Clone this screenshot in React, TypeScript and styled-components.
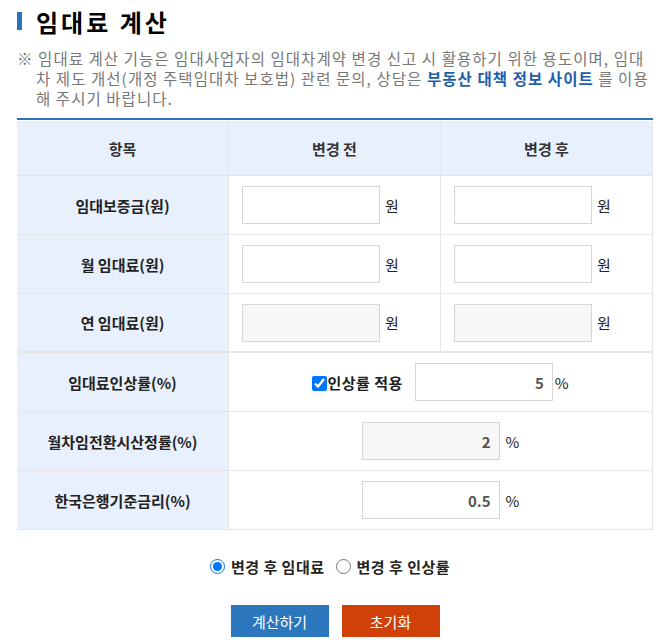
import React, { useState } from 'react';
import styled, { createGlobalStyle } from 'styled-components';

const GlobalStyle = createGlobalStyle`
  body {
    margin: 0;
    background: #fff;
    font-family: "Noto Sans CJK KR", "Noto Sans", sans-serif;
    color: #222;
  }
`;

const Page = styled.div`
  padding: 6px 15px 0 17px;
  width: 636px;
`;

const Title = styled.h2`
  display: flex;
  align-items: center;
  gap: 14px;
  margin: 0;
  height: 30px;
  font-size: 24px;
  font-weight: 700;
  letter-spacing: 3px;
  color: #000;

  &::before {
    content: '';
    width: 5px;
    height: 18px;
    background: #2a72bf;
  }
`;

const Note = styled.p`
  margin: 12px 0 10px;
  padding-left: 19px;
  text-indent: -19px;
  font-size: 15.5px;
  line-height: 20px;
  letter-spacing: 1.05px;
  color: #777;
  word-break: break-all;
`;

const Link = styled.a`
  color: #1f5ea8;
  font-weight: 700;
  text-decoration: none;
`;

const Grid = styled.div`
  display: grid;
  grid-template-columns: 212px 212px 212px;
  border-top: 2px solid #2a72bf;
`;

const HeadCell = styled.div`
  height: 56px;
  box-sizing: border-box;
  border-top: 1px solid #fff;
  border-bottom: 1px solid #dde3eb;
  border-right: 1px solid #e4e8ee;
  background: #e8f0fd;
  display: flex;
  align-items: center;
  justify-content: center;
  font-size: 15px;
  font-weight: 700;
  color: #333;
`;

const Label = styled.div<{ $thick?: boolean }>`
  height: 59px;
  box-sizing: border-box;
  border-bottom: ${p => (p.$thick ? '2px' : '1px')} solid #e6e6e6;
  border-right: 1px solid #e6e6e6;
  background: #e8f0fd;
  display: flex;
  align-items: center;
  justify-content: center;
  font-size: 15px;
  font-weight: 700;
  color: #222;
`;

const Cell = styled.div<{ $thick?: boolean; $span?: number; $center?: boolean }>`
  grid-column: span ${p => p.$span || 1};
  height: 59px;
  box-sizing: border-box;
  border-bottom: ${p => (p.$thick ? '2px' : '1px')} solid #e6e6e6;
  border-right: 1px solid #e6e6e6;
  display: flex;
  align-items: center;
  justify-content: ${p => (p.$center ? 'center' : 'flex-start')};
  padding-left: ${p => (p.$center ? '0' : '13px')};
  font-size: 15px;
  color: #222;
`;

const Field = styled.input<{ $w?: number }>`
  width: ${p => p.$w || 138}px;
  height: 38px;
  box-sizing: border-box;
  border: 1px solid #d6d6d6;
  background: #fff;
  padding: 0 8px;
  margin: 0;
  text-align: right;
  font-family: inherit;
  font-size: 15px;
  font-weight: 700;
  color: #555;
  outline: none;

  &:read-only {
    background: #f7f7f7;
  }
`;

const Unit = styled.span<{ $gap?: number }>`
  margin-left: ${p => p.$gap ?? 5}px;
  font-size: 15px;
  color: #222;
`;

const Check = styled.label`
  display: flex;
  align-items: center;
  font-size: 15px;
  font-weight: 700;
  letter-spacing: 0.5px;
  color: #222;
  margin-right: 12px;

  input {
    width: 15px;
    height: 15px;
    margin: 3px 0 0 0;
  }
`;

const Radios = styled.div`
  display: flex;
  justify-content: center;
  align-items: center;
  gap: 11px;
  margin: 26px 0 0;
  padding-right: 10px;
  height: 20px;
`;

const Radio = styled.label`
  display: flex;
  align-items: center;
  gap: 6px;
  font-size: 15px;
  font-weight: 700;
  letter-spacing: 0.5px;
  color: #222;

  input {
    width: 15px;
    height: 15px;
    margin: 0;
  }
`;

const Buttons = styled.div`
  display: flex;
  justify-content: center;
  gap: 13px;
  margin-top: 29px;
`;

const Button = styled.button<{ $tone: 'blue' | 'red' }>`
  width: 98px;
  height: 32px;
  border: 0;
  padding: 0;
  background: ${p => (p.$tone === 'blue' ? '#2b76bd' : '#d0410a')};
  color: #fff;
  font-family: inherit;
  font-size: 15px;
  cursor: pointer;
`;

const rentRows = [
  { label: '임대보증금(원)', readOnly: false },
  { label: '월 임대료(원)', readOnly: false },
  { label: '연 임대료(원)', readOnly: true },
];

export default function App() {
  const [mode, setMode] = useState('rent');
  const [apply, setApply] = useState(true);

  return (
    <Page>
      <GlobalStyle />
      <Title>임대료 계산</Title>
      <Note>
        ※ 임대료 계산 기능은 임대사업자의 임대차계약 변경 신고 시 활용하기 위한 용도이며, 임대차 제도 개선(개정 주택임대차 보호법) 관련 문의, 상담은{' '}
        <Link href="#">부동산 대책 정보 사이트</Link> 를 이용해 주시기 바랍니다.
      </Note>

      <Grid>
        <HeadCell>항목</HeadCell>
        <HeadCell>변경 전</HeadCell>
        <HeadCell>변경 후</HeadCell>

        {rentRows.map((r, i) => (
          <React.Fragment key={r.label}>
            <Label $thick={i === 2}>{r.label}</Label>
            <Cell $thick={i === 2}>
              <Field readOnly={r.readOnly} defaultValue="" />
              <Unit>원</Unit>
            </Cell>
            <Cell $thick={i === 2}>
              <Field readOnly={r.readOnly} defaultValue="" />
              <Unit>원</Unit>
            </Cell>
          </React.Fragment>
        ))}

        <Label>임대료인상률(%)</Label>
        <Cell $span={2} $center>
          <Check>
            <input type="checkbox" checked={apply} onChange={e => setApply(e.target.checked)} />
            인상률 적용
          </Check>
          <Field defaultValue="5" $w={138} />
          <Unit $gap={2}>%</Unit>
        </Cell>

        <Label>월차임전환시산정률(%)</Label>
        <Cell $span={2} $center>
          <Field readOnly defaultValue="2" />
          <Unit $gap={6}>%</Unit>
        </Cell>

        <Label>한국은행기준금리(%)</Label>
        <Cell $span={2} $center>
          <Field defaultValue="0.5" />
          <Unit $gap={6}>%</Unit>
        </Cell>
      </Grid>

      <Radios>
        <Radio>
          <input type="radio" name="mode" checked={mode === 'rent'} onChange={() => setMode('rent')} />
          변경 후 임대료
        </Radio>
        <Radio>
          <input type="radio" name="mode" checked={mode === 'rate'} onChange={() => setMode('rate')} />
          변경 후 인상률
        </Radio>
      </Radios>

      <Buttons>
        <Button $tone="blue">계산하기</Button>
        <Button $tone="red">초기화</Button>
      </Buttons>
    </Page>
  );
}
